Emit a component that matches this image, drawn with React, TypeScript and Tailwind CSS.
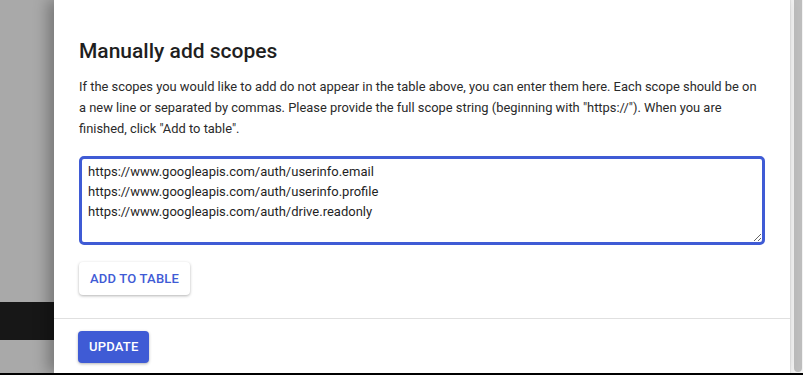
import React from "react";

const scopes = [
  "https://www.googleapis.com/auth/userinfo.email",
  "https://www.googleapis.com/auth/userinfo.profile",
  "https://www.googleapis.com/auth/drive.readonly",
];

/* ─── Backdrop strip on the left ───────────────────────────── */

function Backdrop() {
  return (
    <div className="w-[54px] flex-shrink-0 flex flex-col bg-[#a9a9a9]">
      <div className="h-[302px]" />
      <div className="h-[38px] bg-[#171717]" />
      <div className="flex-1" />
    </div>
  );
}

/* ─── Scrollbar ────────────────────────────────────────────── */

function Scrollbar() {
  return (
    <div className="w-[14px] flex-shrink-0 flex bg-[#f3f3f3] border-l border-[#e6e6e6] pl-[3px] pr-[2px]">
      <div className="w-[8px] h-[372px] bg-[#bdbdbd] rounded-b-[4px]" />
    </div>
  );
}

export default function App() {
  return (
    <div
      className="w-[803px] h-[375px] flex flex-col bg-black overflow-hidden"
      style={{ fontFamily: "Roboto, 'Liberation Sans', sans-serif" }}
    >
      <div className="h-[373px] flex">
        <Backdrop />

        <div className="flex-1 flex flex-col bg-white shadow-[-6px_0_14px_rgba(0,0,0,0.3)] z-10">
          <div className="px-[25px] pt-[38px] flex-1">
            <h2 className="text-[21px] leading-[26px] font-medium text-[#1f1f1f]">
              Manually add scopes
            </h2>
            <p className="mt-[12px] text-[12.9px] leading-[21px] text-[#2a2a2a]">
              If the scopes you would like to add do not appear in the table above, you can enter them here. Each scope should be on a new line or separated by commas. Please provide the full scope string (beginning with "https://"). When you are finished, click "Add to table".
            </p>

            <textarea
              readOnly
              value={scopes.join("\n")}
              className="mt-[17px] block w-[686px] h-[89px] border-[3px] border-[#3f5bd5] rounded-[5px] px-[6px] pt-[3px] text-[13px] leading-[20px] text-[#1f1f1f] outline-none resize-y"
            />

            <button className="mt-[17px] h-[33px] px-[11px] rounded-[4px] bg-white text-[#3f5bd5] text-[13px] font-medium tracking-[0.2px] shadow-[0_1px_3px_rgba(0,0,0,0.3)]">
              ADD TO TABLE
            </button>
          </div>

          {/* Footer */}
          <div className="border-t border-[#e0e0e0] h-[55px] px-[24px] pt-[12px]">
            <button className="h-[32px] px-[11px] rounded-[4px] bg-[#3f5bd5] text-white text-[13px] font-medium tracking-[0.2px] shadow-[0_1px_3px_rgba(0,0,0,0.3)]">
              UPDATE
            </button>
          </div>
        </div>

        <Scrollbar />
      </div>
    </div>
  );
}
